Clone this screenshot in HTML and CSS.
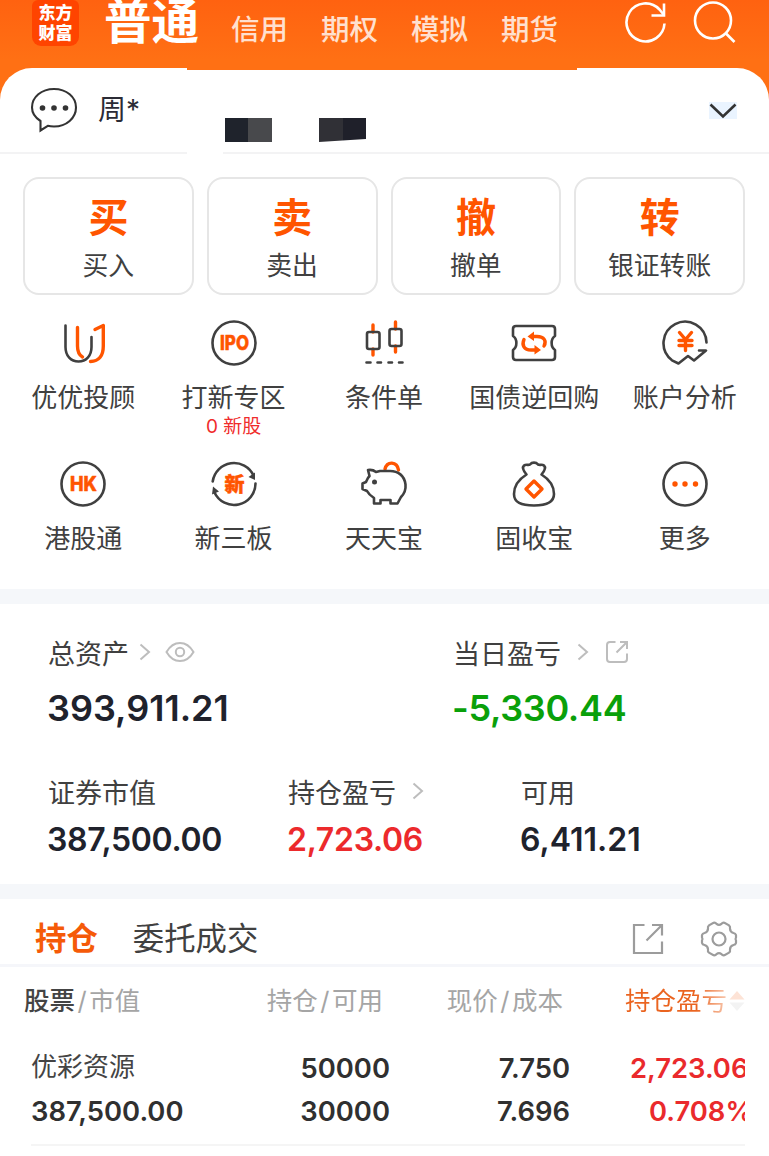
FILE: index.html
```html
<!DOCTYPE html>
<html lang="zh-CN">
<head>
  <meta charset="UTF-8">
  <meta name="viewport" content="width=device-width, initial-scale=1.0">
  <title>东方财富 - 普通交易</title>
  <link rel="stylesheet" href="styles.css">
</head>
<body>
  <header class="header">
    <div class="logo"><span>东方</span><span>财富</span></div>
    <nav class="nav">
      <a class="active">普通</a>
      <a>信用</a>
      <a>期权</a>
      <a>模拟</a>
      <a>期货</a>
    </nav>
    <div class="header-icons">
      <svg width="44" height="46" viewBox="0 0 44 46" fill="none" stroke="#fff" stroke-width="2.6">
        <path d="M40.5 23.5A19 19 0 1 1 35.5 9.5L40 15"/>
        <path d="M27.5 15.5H40V3.5"/>
      </svg>
      <svg width="44" height="46" viewBox="0 0 44 46" fill="none" stroke="#fff" stroke-width="2.6">
        <circle cx="20" cy="20.5" r="18"/>
        <path d="M32.5 33L41.5 42"/>
      </svg>
    </div>
  </header>

  <main class="sheet">
    <div class="account">
      <svg class="chat" width="48" height="46" viewBox="0 0 48 46" fill="none" stroke="#333" stroke-width="2.1">
        <path d="M10.5 34C5 30.5 2 25.5 2 20.5C2 10 11.5 2 24 2S46 10 46 20.5S36.5 39.5 24 39.5C21.5 39.5 19.5 39.3 17.8 38.8L10.5 43.5Z"/>
        <g fill="#333" stroke="none"><circle cx="12.5" cy="21" r="2.8"/><circle cx="24" cy="21" r="2.8"/><circle cx="35.5" cy="21" r="2.8"/></g>
      </svg>
      <span class="user">周*</span>
      <div class="masks">
        <i class="mask mask-a"></i>
        <i class="mask mask-b"></i>
      </div>
      <svg class="down" width="28" height="17" viewBox="0 0 28 17" fill="none" stroke="#333" stroke-width="2.6">
        <path d="M1.5 2.500L14 14.500L26.500 2.500"/>
      </svg>
    </div>

    <div class="trade">
      <a class="trade-card"><b>买</b><span>买入</span></a>
      <a class="trade-card"><b>卖</b><span>卖出</span></a>
      <a class="trade-card"><b>撤</b><span>撤单</span></a>
      <a class="trade-card"><b>转</b><span>银证转账</span></a>
    </div>

    <div class="menu">
      <a class="menu-item">
        <svg class="icon" viewBox="0 0 48 48">
          <path d="M6.5 6.500V28C6.500 37 12 42.500 19.500 42.500S32.500 37 32.500 28V18"/>
          <path class="hot" d="M18.500 8.500V27C18.500 33 20 36 23.500 38"/>
          <path class="hot" d="M36 10.500L44.300 6.500V27C44.300 36.500 40 42.500 31.500 42.500"/>
        </svg>
        <span>优优投顾</span>
      </a>
      <a class="menu-item">
        <svg class="icon" viewBox="0 0 48 48">
          <circle cx="24" cy="24" r="21.5"/>
          <text class="ipo" x="24.500" y="31" textLength="29" lengthAdjust="spacingAndGlyphs">IPO</text>
        </svg>
        <span>打新专区</span>
        <em>0 新股</em>
      </a>
      <a class="menu-item">
        <svg class="icon" viewBox="0 0 48 48">
          <path class="hot candle" d="M13 6V13M13 30V36M35.500 3V10M35.500 27V33"/>
          <rect x="7" y="13" width="12.500" height="17" rx="2"/>
          <rect x="29.500" y="10" width="12" height="17" rx="2"/>
          <path d="M6.500 43.500H10.500M17.500 43.500H21M28.500 43.500H32M39 43.500H42.500"/>
        </svg>
        <span>条件单</span>
      </a>
      <a class="menu-item">
        <svg class="icon" viewBox="0 0 48 48">
          <path d="M6 7H42Q45 7 45 10V17C40.500 20 40.500 28 45 31V38Q45 41 42 41H6Q3 41 3 38V31C7.500 28 7.500 20 3 17V10Q3 7 6 7Z"/>
          <path class="hot" d="M22 17.500H27C34 17.500 37 22 34 27M27 31H21C14 31 11.500 26 14 20.500"/>
          <path class="hot-fill" d="M24 12.500V22L17.500 17.500ZM24.500 26V35.500L31 31Z"/>
        </svg>
        <span>国债逆回购</span>
      </a>
      <a class="menu-item">
        <svg class="icon" viewBox="0 0 48 48">
          <path d="M45.500 23.500A21.500 21.500 0 1 0 11 41.300L17.500 44.500L27 37L33 41.500L45 31.500H38"/>
          <path class="hot" d="M18.500 13.500L24.500 20.500L30.500 13.500M24.500 20.500V31.500M18 21.500H31M18 26.500H31"/>
        </svg>
        <span>账户分析</span>
      </a>
      <a class="menu-item">
        <svg class="icon" viewBox="0 0 48 48">
          <circle cx="24" cy="24" r="21.5"/>
          <text x="24.500" y="31" textLength="27" lengthAdjust="spacingAndGlyphs">HK</text>
        </svg>
        <span>港股通</span>
      </a>
      <a class="menu-item">
        <svg class="icon" viewBox="0 0 48 48">
          <path d="M2.700 21.500A21.500 21.500 0 0 1 43.500 15.500M45.500 23.500A21.500 21.500 0 0 1 4.500 32.500"/>
          <path class="dark-fill" d="M38.500 17L45 12.500V20ZM9 31.500L2 34.500L3 26.500Z"/>
          <text x="24.500" y="31.500">新</text>
        </svg>
        <span>新三板</span>
      </a>
      <a class="menu-item">
        <svg class="icon" viewBox="0 0 48 48">
          <path class="hot" d="M25 9C27 1 37 1 38.500 10"/>
          <path d="M16 12C13 9.500 11 9.500 8 10L9.500 16C7.500 18 7 19.500 6 22L2.500 23.500V29L7 31C8.500 34 11 36 14 38V43.500H20.500V40H30.500V43.500H37.500L41 37C44.500 33.500 46 29.500 45.500 24.500C44.500 15.500 38 11 30 11H20Z"/>
          <circle class="dark-fill" cx="14.500" cy="22" r="2.500"/>
        </svg>
        <span>天天宝</span>
      </a>
      <a class="menu-item">
        <svg class="icon" viewBox="0 0 48 48">
          <path d="M16.500 14.500C13.500 11 12 7.500 14 5.500C16 4 18.500 5.500 20 4.500C22 2 26 2 28 4.500C30 5.500 32 4 34 5.500C36 7.500 34.500 11 31.500 14.500C39.500 19.500 44 26 44 34C44 42.500 37 45.500 24 45.500S4 42.500 4 34C4 26 8.500 19.500 16.500 14.500Z"/>
          <path class="hot" d="M24 21L32 29L24 37L16 29Z"/>
        </svg>
        <span>固收宝</span>
      </a>
      <a class="menu-item">
        <svg class="icon" viewBox="0 0 48 48">
          <circle cx="24" cy="24" r="21.5"/>
          <g class="hot-fill"><circle cx="14" cy="24" r="2.700"/><circle cx="24" cy="24" r="2.700"/><circle cx="34.500" cy="24" r="2.700"/></g>
        </svg>
        <span>更多</span>
      </a>
    </div>
  </main>

  <section class="assets">
    <div class="assets-main">
      <div class="asset">
        <div class="label">总资产
          <svg class="arrow" width="12" height="18" viewBox="0 0 12 18"><path d="M1.500 1.500L10 9L1.500 16.500"/></svg>
          <svg class="eye" width="30" height="22" viewBox="0 0 30 22"><path d="M1.500 11C5 5 9.500 2 15 2S25 5 28.500 11C25 17 20.500 20 15 20S5 17 1.500 11Z"/><circle cx="15" cy="11" r="4.200"/></svg>
        </div>
        <div class="value">393,911.21</div>
      </div>
      <div class="asset">
        <div class="label">当日盈亏
          <svg class="arrow arrow-far" width="12" height="18" viewBox="0 0 12 18"><path d="M1.500 1.500L10 9L1.500 16.500"/></svg>
          <svg class="share-sm" width="24" height="24" viewBox="0 0 24 24"><path d="M10.500 2H5Q2 2 2 5V19Q2 22 5 22H19Q22 22 22 19V13.500M11.500 12.500L21.500 2.500M15 2H22V9"/></svg>
        </div>
        <div class="value down-value">-5,330.44</div>
      </div>
    </div>
    <div class="assets-sub">
      <div class="asset">
        <div class="label">证券市值</div>
        <div class="value">387,500.00</div>
      </div>
      <div class="asset">
        <div class="label">持仓盈亏
          <svg class="arrow arrow-far" width="12" height="18" viewBox="0 0 12 18"><path d="M1.500 1.500L10 9L1.500 16.500"/></svg>
        </div>
        <div class="value up">2,723.06</div>
      </div>
      <div class="asset">
        <div class="label">可用</div>
        <div class="value cash">6,411.21</div>
      </div>
    </div>
  </section>

  <section class="positions">
    <div class="tabs">
      <a class="tab active">持仓</a>
      <a class="tab">委托成交</a>
      <div class="tab-icons">
        <svg width="32" height="32" viewBox="0 0 32 32"><path d="M12.500 2H2V30H30V18.500M14.500 17.500L29.500 2.500M20 2H30V12.500"/></svg>
        <svg width="38" height="36" viewBox="0 0 38 36"><path d="M13.500 1.800Q15.500 1.400 16.500 2.800Q19 4.800 21.500 2.800Q22.500 1.400 24.500 1.800L29 4.300Q30.500 5.500 30 7.500Q30 11 33.500 12Q35.500 12.300 36 14V16.500Q35 18 36 19.500V22Q35.500 23.700 33.500 24Q30 25 30 28.500Q30.500 30.500 29 31.700L24.500 34.200Q22.500 34.600 21.500 33.200Q19 31.200 16.500 33.200Q15.500 34.600 13.500 34.200L9 31.700Q7.500 30.500 8 28.500Q8 25 4.500 24Q2.500 23.700 2 22V19.500Q3 18 2 16.500V14Q2.500 12.300 4.500 12Q8 11 8 7.500Q7.500 5.500 9 4.300Z"/><circle cx="19" cy="18" r="6.500"/></svg>
      </div>
    </div>
    <div class="row row-head">
      <div><strong>股票</strong><i>/</i>市值</div>
      <div>持仓<i>/</i>可用</div>
      <div>现价<i>/</i>成本</div>
      <div class="sorted"><span>持仓盈亏</span><svg width="16" height="22" viewBox="0 0 16 22"><path fill="#fde3d6" d="M8 1L15.500 9.500H.5Z"/><path fill="#f3f3f3" d="M8 21L15.500 12.500H.5Z"/></svg></div>
    </div>
    <div class="row row-stock">
      <div><span class="name">优彩资源</span><span>387,500.00</span></div>
      <div><span>50000</span><span>30000</span></div>
      <div><span>7.750</span><span>7.696</span></div>
      <div class="profit"><span>2,723.06</span><span class="rate">0.708%</span></div>
    </div>
  </section>
</body>
</html>
```

FILE: styles.css
```css
* {
  box-sizing: border-box;
}
body {
  margin: 0;
  width: 769px;
  height: 1156px;
  overflow: hidden;
  background: #fff;
  color: #404040;
  font-family: Inter, "Noto Sans CJK SC", sans-serif;
}
svg {
  display: block;
  flex: none;
}
i, em {
  font-style: normal;
}

/* header */
.header {
  display: flex;
  height: 100px;
  padding-left: 32px;
  background: linear-gradient(#ff6210, #ff7014 60px);
}
.logo {
  display: flex;
  flex-direction: column;
  align-items: center;
  width: 47px;
  height: 46px;
  padding-top: 3px;
  border-radius: 6px 6px 9px 9px;
  background: #ff4400;
  color: #fff;
  font-size: 17px;
  font-weight: 900;
  line-height: 20px;
}
.nav {
  display: flex;
  height: 60px;
  margin-left: 25px;
  color: #ffe0cf;
  font-size: 28.5px;
  font-weight: 500;
  line-height: 60px;
}
.nav a {
  width: 90px;
}
.nav .active {
  width: 127px;
  color: #fff;
  font-size: 47.5px;
  font-weight: 700;
  line-height: 44px;
}
.header-icons {
  display: flex;
  gap: 25px;
  margin-left: 33px;
}

/* account row */
.sheet {
  position: relative;
  height: 521px;
  margin-top: -32px;
  border-radius: 32px 32px 0 0;
  background: #fff;
}
.sheet::before {
  content: '';
  position: absolute;
  top: 0;
  left: 187px;
  width: 390px;
  height: 2px;
  background: #ff7014;
}
.sheet::after {
  content: '';
  position: absolute;
  top: 84px;
  left: 187px;
  width: 36px;
  height: 2px;
  background: #fff;
}
.account {
  display: flex;
  height: 86px;
  padding: 0 32px 0 30px;
  border-bottom: 2px solid #f3f3f4;
}
.chat {
  margin-top: 19px;
}
.user {
  width: 127px;
  margin-left: 20px;
  color: #2b2b35;
  font-size: 28px;
  line-height: 84px;
}
.masks {
  display: flex;
  gap: 47px;
  margin-top: 50px;
}
.mask {
  width: 47px;
  height: 24px;
}
.mask-a {
  background: linear-gradient(90deg, #1f232c 50%, #48494c 50%);
}
.mask-b {
  background: linear-gradient(90deg, #303036 50%, #1f202a 50%);
  clip-path: polygon(0 0, 100% 0, 100% 88%, 0 100%);
}
.down {
  margin: 34px 0 0 auto;
  background: #eaf4ff;
}

/* trade buttons */
.trade {
  display: grid;
  grid-template-columns: repeat(4, 1fr);
  gap: 13px;
  padding: 23px 24px 0 23px;
}
.trade-card {
  display: flex;
  flex-direction: column;
  align-items: center;
  height: 118px;
  padding-top: 14px;
  border: 2px solid #e6e6e6;
  border-radius: 16px;
  font-size: 25.8px;
  line-height: 48px;
}
.trade-card b {
  color: #ff5500;
  font-size: 40px;
  line-height: 49px;
}

/* menu */
.menu {
  display: grid;
  grid-template-columns: repeat(5, 150.4px);
  grid-auto-rows: 141px;
  padding: 24px 8px 0;
}
.menu-item {
  display: flex;
  flex-direction: column;
  align-items: center;
  font-size: 26px;
  line-height: 40px;
  white-space: nowrap;
}
.menu-item span {
  margin-top: 11px;
}
.menu-item em {
  color: #f02c2c;
  font-size: 19px;
  line-height: 18px;
}
.icon {
  width: 48px;
  height: 48px;
  fill: none;
  stroke: #404040;
  stroke-width: 2.6;
  stroke-linecap: round;
  stroke-linejoin: round;
}
.icon .hot {
  stroke: #ff5500;
  stroke-width: 3.4;
}
.icon .hot-fill {
  fill: #ff5500;
  stroke: none;
}
.icon .dark-fill {
  fill: #404040;
  stroke: none;
}
.icon text {
  fill: #ff5500;
  stroke: #ff5500;
  stroke-width: .5;
  font-size: 20px;
  font-weight: 800;
  text-anchor: middle;
}

/* assets */
.assets {
  height: 310px;
  padding: 42px 48px 0;
  border-top: 15px solid #f5f7fa;
  border-bottom: 15px solid #f5f7fa;
}
.assets-main {
  display: grid;
  grid-template-columns: 405px 1fr;
}
.assets-sub {
  display: grid;
  grid-template-columns: 240px 233px 1fr;
  margin-top: 55px;
}
.label {
  display: flex;
  align-items: center;
  height: 40px;
  margin-top: -14px;
  font-size: 27px;
}
.value {
  margin: 14px 0 0 -1px;
  color: #20222c;
  font-size: 36px;
  font-weight: 600;
  line-height: 44px;
}
.assets-sub .value {
  margin-top: 7px;
  font-size: 32px;
  letter-spacing: -.3px;
}
.assets-sub .cash {
  letter-spacing: 0;
}
.value.up {
  color: #ec2a2c;
}
.value.down-value {
  color: #0aa00a;
  letter-spacing: -.3px;
}
.label svg {
  fill: none;
  stroke: #bdbdbd;
  stroke-width: 2;
}
.arrow {
  margin-left: 10px;
}
.arrow-far {
  margin-left: 16px;
}
.eye {
  margin-left: 14px;
}
.share-sm {
  margin-left: 16px;
}

/* positions */
.tabs {
  display: flex;
  height: 68px;
  padding: 0 31px 0 35px;
  border-bottom: 3px solid #f5f6fa;
  font-size: 31.4px;
  line-height: 80px;
}
.tab {
  margin-right: 35px;
}
.tab.active {
  color: #f55a08;
  font-weight: 700;
}
.tab-icons {
  display: flex;
  align-items: center;
  gap: 36px;
  height: 80px;
  margin-left: auto;
}
.tab-icons svg {
  fill: none;
  stroke: #9c9c9c;
  stroke-width: 2.2;
}
.row {
  display: grid;
  grid-template-columns: 1fr 120px 180px 182px;
  text-align: right;
}
.row > :first-child {
  text-align: left;
}
.row-head {
  padding: 0 24px;
  color: #a5a5a5;
  font-size: 25.5px;
  line-height: 67px;
}
.row-head i {
  padding: 0 2.5px;
}
.row-head strong {
  color: #444;
  font-weight: 500;
}
.row-head .sorted {
  display: flex;
  align-items: center;
  justify-content: flex-end;
  gap: 2px;
}
.sorted span {
  background: linear-gradient(90deg, #ea6420 70%, #f8c9b0);
  background-clip: text;
  -webkit-background-clip: text;
  color: transparent;
}
.row-stock {
  grid-template-columns: 1fr 120px 180px 175px;
  margin: 0 24px 0 31px;
  padding-top: 12px;
  height: 112px;
  border-bottom: 2px solid #f5f5f5;
  color: #303030;
  font-size: 27.4px;
  font-weight: 600;
  line-height: 43px;
}
.row-stock span {
  display: block;
}
.row-stock > div {
  padding-top: 1px;
}
.row-stock .name {
  margin-top: -2px;
  padding-bottom: 2px;
  font-size: 26px;
  font-weight: 400;
  color: #444;
}
.row-stock .profit {
  overflow: hidden;
  padding-left: 60px;
  color: #ea2a2c;
  text-align: left;
  white-space: nowrap;
}
.row-stock .rate {
  padding-left: 19px;
}
```
